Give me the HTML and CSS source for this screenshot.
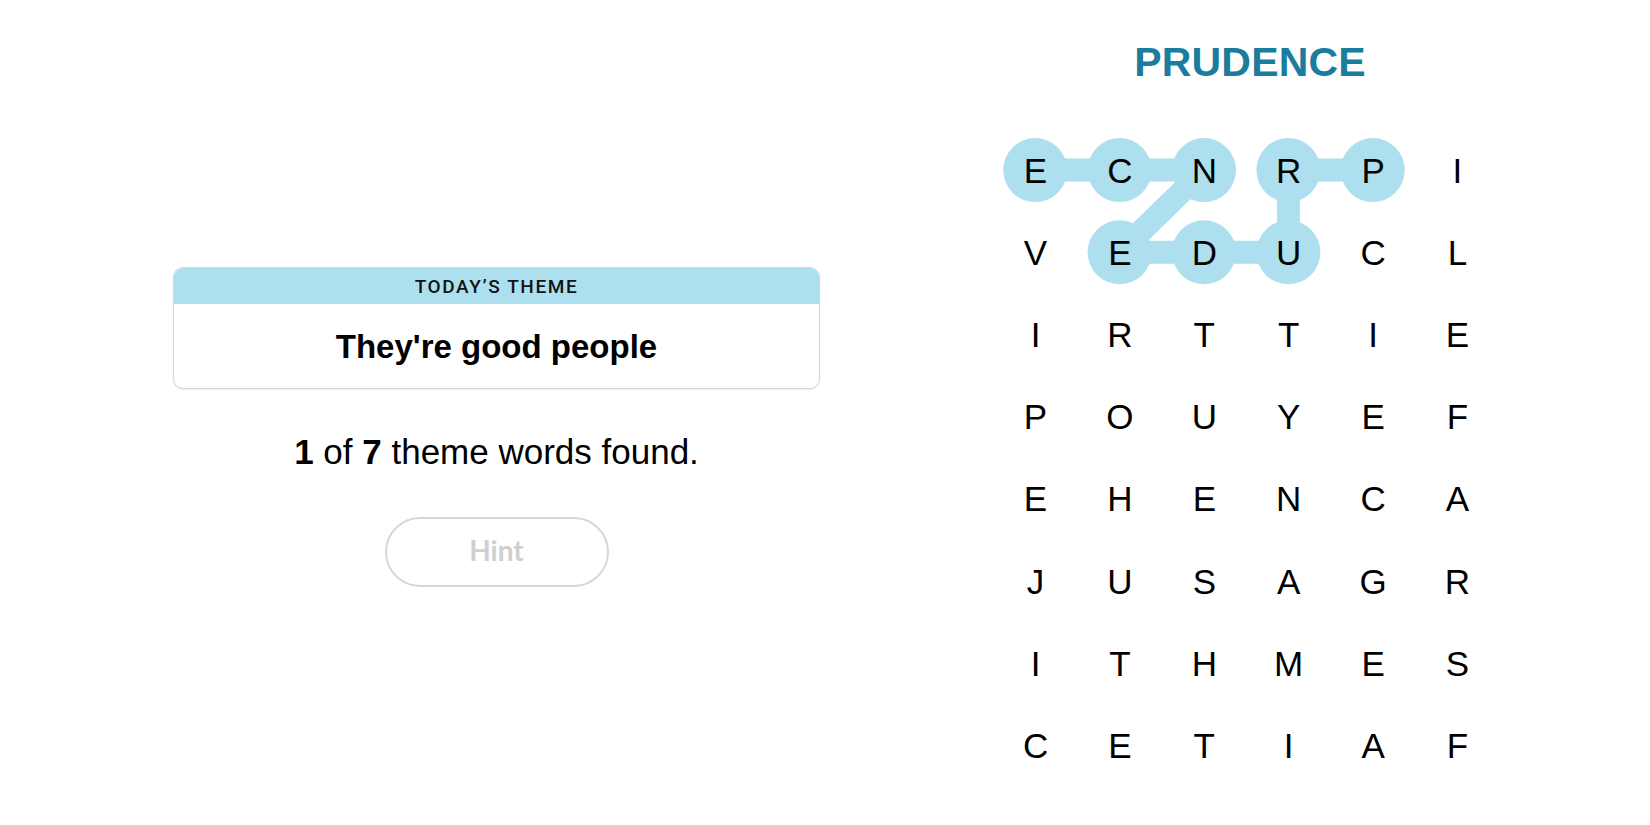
FILE: index.html
```html
<!DOCTYPE html>
<html lang="en">
<head>
<meta charset="utf-8">
<title>Strands</title>
<link rel="stylesheet" href="styles.css">
</head>
<body>
<main class="page">
  <section class="info">
    <div class="theme-card">
      <div class="theme-head">TODAY’S THEME</div>
      <div class="theme-body">They're good people</div>
    </div>
    <p class="stats"><b>1</b> of <b>7</b> theme words found.</p>
    <button class="hint" type="button">Hint</button>
  </section>
  <section class="board">
    <h1 class="word">PRUDENCE</h1>
    <div class="grid">
      <svg class="paths" width="506.4" height="657.6" viewBox="0 0 506.4 657.6">
        <polyline points="379.8,41.1 295.4,41.1 295.4,123.3 211,123.3 126.6,123.3 211,41.1 126.6,41.1 42.2,41.1" fill="none" stroke="#aedfee" stroke-width="23" stroke-linejoin="round" stroke-linecap="round"/>
        <circle cx="379.8" cy="41.1" r="32" fill="#aedfee"/>
        <circle cx="295.4" cy="41.1" r="32" fill="#aedfee"/>
        <circle cx="295.4" cy="123.3" r="32" fill="#aedfee"/>
        <circle cx="211" cy="123.3" r="32" fill="#aedfee"/>
        <circle cx="126.6" cy="123.3" r="32" fill="#aedfee"/>
        <circle cx="211" cy="41.1" r="32" fill="#aedfee"/>
        <circle cx="126.6" cy="41.1" r="32" fill="#aedfee"/>
        <circle cx="42.2" cy="41.1" r="32" fill="#aedfee"/>
      </svg>
      <span class="cell">E</span><span class="cell">C</span><span class="cell">N</span><span class="cell">R</span><span class="cell">P</span><span class="cell">I</span>
      <span class="cell">V</span><span class="cell">E</span><span class="cell">D</span><span class="cell">U</span><span class="cell">C</span><span class="cell">L</span>
      <span class="cell">I</span><span class="cell">R</span><span class="cell">T</span><span class="cell">T</span><span class="cell">I</span><span class="cell">E</span>
      <span class="cell">P</span><span class="cell">O</span><span class="cell">U</span><span class="cell">Y</span><span class="cell">E</span><span class="cell">F</span>
      <span class="cell">E</span><span class="cell">H</span><span class="cell">E</span><span class="cell">N</span><span class="cell">C</span><span class="cell">A</span>
      <span class="cell">J</span><span class="cell">U</span><span class="cell">S</span><span class="cell">A</span><span class="cell">G</span><span class="cell">R</span>
      <span class="cell">I</span><span class="cell">T</span><span class="cell">H</span><span class="cell">M</span><span class="cell">E</span><span class="cell">S</span>
      <span class="cell">C</span><span class="cell">E</span><span class="cell">T</span><span class="cell">I</span><span class="cell">A</span><span class="cell">F</span>
    </div>
  </section>
</main>
</body>
</html>
```

FILE: styles.css
```css
* { box-sizing: border-box; }

html, body {
  margin: 0;
  padding: 0;
  background: #ffffff;
}

body {
  font-family: "Liberation Sans", Arial, sans-serif;
  color: #000;
  width: 1650px;
  height: 825px;
  overflow: hidden;
}

.page {
  display: flex;
  flex-direction: row;
  align-items: flex-start;
}

/* ---------- left info column ---------- */
.info {
  width: 993px;
  flex: none;
  display: flex;
  flex-direction: column;
  align-items: center;
  padding-top: 267px;
}

.theme-card {
  width: 647px;
  border: 1px solid #d6d6d6;
  border-radius: 10px;
  overflow: hidden;
  box-shadow: 0 1px 2px rgba(0, 0, 0, 0.08);
  background: #fff;
}

.theme-head {
  height: 36px;
  background: #aedfee;
  display: flex;
  align-items: center;
  justify-content: center;
  font-family: Roboto, "Liberation Sans", sans-serif;
  font-weight: 500;
  font-size: 19px;
  letter-spacing: 1.6px;
  line-height: 19px;
  color: #121212;
  padding-top: 1px;
}

.theme-body {
  height: 84px;
  display: flex;
  align-items: center;
  justify-content: center;
  font-size: 33px;
  font-weight: 700;
  line-height: 33px;
  color: #000;
}

.stats {
  margin: 45px 0 0;
  font-size: 35px;
  line-height: 35px;
  color: #000;
}

.stats b { font-weight: 700; }

.hint {
  margin-top: 48px;
  width: 224px;
  height: 70px;
  border: 2px solid #d7d7d7;
  border-radius: 35px;
  background: #fff;
  font-family: Lato, "Liberation Sans", sans-serif;
  font-weight: 700;
  font-size: 28px;
  color: #cfcfcf;
  padding: 0 0 4px;
}

/* ---------- right board ---------- */
.board {
  flex: none;
  width: 507px;
  display: flex;
  flex-direction: column;
  align-items: center;
}

.word {
  margin: 42px 0 0;
  padding-left: 7px;
  font-size: 41px;
  line-height: 41px;
  font-weight: 700;
  color: #1b7d9e;
  letter-spacing: 0.2px;
}

.grid {
  position: relative;
  margin-top: 46px;
  display: grid;
  grid-template-columns: repeat(6, 84.4px);
  grid-template-rows: repeat(8, 82.2px);
}

.paths {
  position: absolute;
  left: 0;
  top: 0;
  z-index: 0;
}

.cell {
  position: relative;
  z-index: 1;
  display: flex;
  align-items: center;
  justify-content: center;
  font-size: 35px;
  line-height: 35px;
  color: #000;
}
```
